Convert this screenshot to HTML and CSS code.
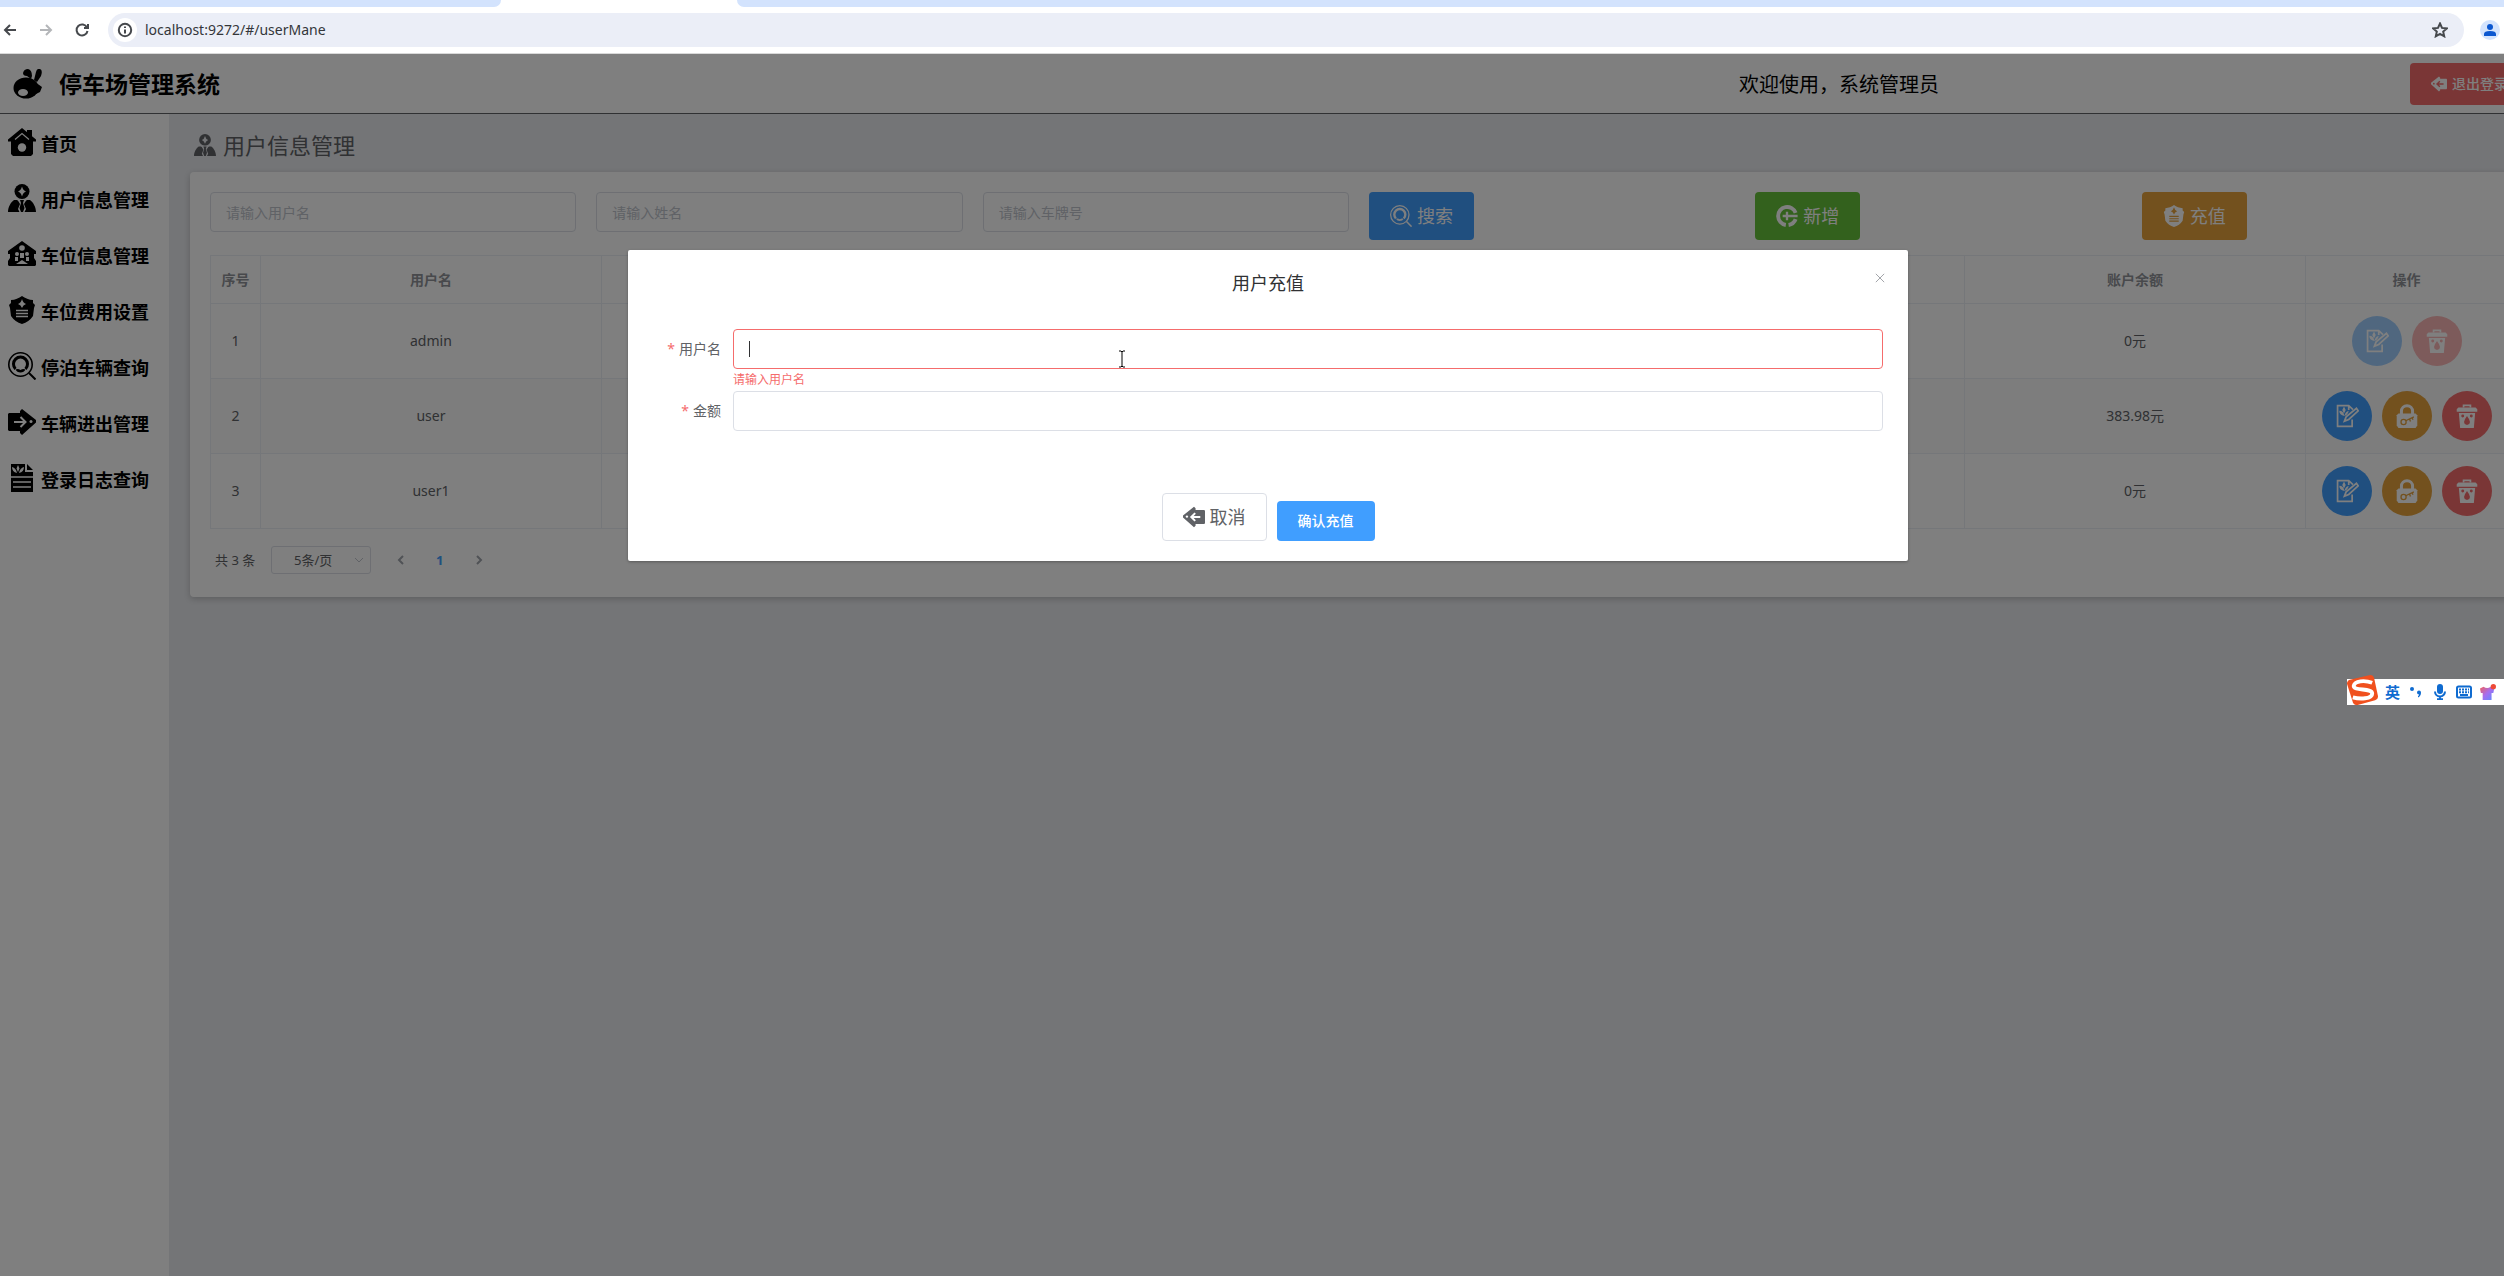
FILE: index.html
```html
<!DOCTYPE html>
<html lang="zh-CN">
  <head>
    <meta charset="UTF-8" />
    <title>停车场管理系统</title>
    <link rel="stylesheet" href="styles.css">
  </head>
  <body>
    <svg class="sprite" aria-hidden="true">
      <symbol id="i-home" viewBox="0 0 28 28">
        <path d="M19 2h5v8h-5z" />
        <path d="M14 0 0 11.500v2h3v12.500l2 2h18l2-2V13.500h3v-2z" />
        <path class="hole-line" stroke-width="1.200" d="M7 11.500 14 5.500l7 6" />
        <circle class="hole" cx="14" cy="19.500" r="4.200" />
      </symbol>
      <symbol id="i-user" viewBox="0 0 28 28">
        <circle cx="14" cy="7.500" r="7.500" />
        <path class="hole" d="M14 2.500q1 4 4 5-3 1-4 5-1-4-4-5 3-1 4-5z" />
        <path d="M0 28c0-5 3-10 6-12h3l5 3 5-3h3c3 2 6 7 6 12z" />
        <path class="hole" d="M9 15h10l-3 5 2 5-1.500 3h-5L10 25l2-5z" />
        <path d="M12 16h4l-1 3 1.500 5-1.500 4h-2l-1.500-4L13 19z" />
      </symbol>
      <symbol id="i-bank" viewBox="0 0 28 28">
        <path d="M14 1 0 11v3h2v4l-2 3v4l1 1h26l1-1v-4l-2-3v-4h2v-3z" />
        <circle class="hole" cx="14" cy="8" r="2.800" />
        <circle class="hole" cx="9" cy="14" r="2" />
        <circle class="hole" cx="19" cy="14" r="2" />
        <path class="hole" d="M12 13h4v5h-4zM7 17h3v4H7zM18 17h3v4h-3zM8 24l6-4 6 4z" />
      </symbol>
      <symbol id="i-shield" viewBox="0 0 28 28">
        <path d="M14 0c3 2 7 4 11 4v3l2 2-1 3-1 8q-4 6-11 8-7-2-11-8L2 12 1 9l2-2V4c4 0 8-2 11-4z" />
        <path class="hole" d="M14 3q1 4 4 5-3 1-4 4-1-3-4-4 3-1 4-5z" />
        <path class="hole-line" stroke-width="1.500" d="M8 14.500h12M8 17.500h12M8 20.500h12" />
      </symbol>
      <symbol id="i-find" viewBox="0 0 28 28">
        <circle class="line" cx="12.500" cy="12.500" r="11.700" stroke-width="1.600" />
        <path class="line" stroke-width="2" d="m21 21 6.500 6.500" />
        <path class="line" stroke-width="3" d="M7.500 17a7 7 0 1 1 10 0" />
        <path d="M7.500 17.500q2.500-1 5 .500 2.500-1.500 5-.500-1.500 3-5 3t-5-3z" />
      </symbol>
      <symbol id="i-out" viewBox="0 0 28 28">
        <path d="M1 5h11V3l2-2 14 11v2.500L14 27l-2-2v-2H1l-1-1V6z" />
        <path class="hole-line" stroke-width="2" d="M6 14h11M12.500 9l5 5-5 5" />
        <circle class="hole" cx="23" cy="13.500" r="1.500" />
      </symbol>
      <symbol id="i-back" viewBox="0 0 28 28">
        <path d="M27 5H16V3l-2-2L0 12v2.500L14 27l2-2v-2h11l1-1V6z" />
        <path class="hole-line" stroke-width="2.500" d="M22 14H11M15.500 9l-5 5 5 5" />
        <circle class="hole" cx="5" cy="13.500" r="1.500" />
      </symbol>
      <symbol id="i-log" viewBox="0 0 28 28">
        <path d="M3 0h14v8h8v20H3zM19 0l6 6h-6z" />
        <path class="hole" d="M10 1l1.500 3.500L10 8 8.500 4.500zM4 3q4 1 5 6-5-1-5-6zM16 3q-4 1-5 6 5-1 5-6z" />
        <path class="hole-line" stroke-width="1.500" d="M3 13h22M5 18h18M5 23h18" />
      </symbol>
      <symbol id="i-add" viewBox="0 0 28 28">
        <path class="line" stroke-width="5" d="M25 10A11.500 11.500 0 1 0 12.500 25.400M16 25.400A11.500 11.500 0 0 0 25 18" />
        <path class="line" stroke-width="3" d="M14 8.500v11M8.500 14h19" />
      </symbol>
      <symbol id="i-edit" viewBox="0 0 28 28">
        <path class="line" stroke-width="2" d="M20 18v8H3V2h13l5 4.500M16 2v5" />
        <path d="M10.500 3l2 4-2 4-2-4zM5 8q5 0 6 6-6-1-6-6zM16 8q-4 1-5 6 4-1 5-6z" />
        <path class="line" stroke-width="2" d="M11 20l2-5L25 5l2 3L16 18z" />
      </symbol>
      <symbol id="i-lock" viewBox="0 0 28 28">
        <path class="line" stroke-width="3.500" d="M7.500 13V8.500a6.500 6.500 0 0 1 13 0V13" />
        <path d="M4 11h20l2 2v12l-2 3H4l-2-3V13z" />
        <circle class="hole-line" cx="10" cy="21" r="3" stroke-width="1.500" />
        <path class="hole-line" stroke-width="1.500" d="M12.500 19.500 22 15M17 17.500l1 3M20 16l1 2.500" />
      </symbol>
      <symbol id="i-trash" viewBox="0 0 28 28">
        <path class="line" stroke-width="2" d="M10 4V1.500h8V4" />
        <path d="M4 4h20l2 2v3H2V6zM4.500 10.500h19L22 28H6z" />
        <path class="hole" d="M14 14q7 9 0 10.500-7-1.500 0-10.500z" />
        <circle class="hole" cx="9" cy="14" r="1.700" />
        <circle class="hole" cx="19" cy="14" r="1.700" />
      </symbol>
    </svg>

    <div class="browser">
      <div class="tabs">
        <span class="tab tab-left"></span>
        <span class="tab tab-right"></span>
      </div>
      <div class="toolbar">
        <button class="nav-btn" aria-label="后退"><svg viewBox="0 0 16 16"><path d="M14 8H3M8 3 3 8l5 5" /></svg></button>
        <button class="nav-btn dim" aria-label="前进"><svg viewBox="0 0 16 16"><path d="M2 8h11M8 3l5 5-5 5" /></svg></button>
        <button class="nav-btn" aria-label="刷新"><svg viewBox="0 0 16 16"><path d="M13 5.500A5.500 5.500 0 1 0 13.500 9M14 2v4h-4" /></svg></button>
        <div class="address">
          <span class="site-info"><svg viewBox="0 0 16 16"><circle cx="8" cy="8" r="6.200" /><path d="M8 7.500v4M8 4.500v1.500" /></svg></span>
          <input class="url" aria-label="地址" value="localhost:9272/#/userMane" />
          <svg class="star" viewBox="0 0 16 16"><path d="m8 1.500 2 4.400 4.800.500-3.600 3.200 1 4.700L8 11.900l-4.200 2.400 1-4.700L1.200 6.400 6 5.900z" /></svg>
        </div>
        <span class="profile"><svg viewBox="0 0 20 20"><circle cx="10" cy="7" r="3" /><path d="M4 16v-2q0-3 6-3t6 3v2z" /></svg></span>
      </div>
    </div>

    <div class="page">
      <div class="app">
        <header class="header">
          <div class="brand">
            <svg class="logo" viewBox="0 0 30 30">
              <ellipse cx="13" cy="19" rx="12.500" ry="10.500" />
              <path d="M10 4q1-4 5-4 4 1 4 7l-1 3-4-3q-4 0-4-3zM23 3q1-4 4-3 3 1 1 7l-4 6-3-2zM22 13l7 5-2 5-4 2z" />
              <ellipse class="hole" cx="10" cy="23.500" rx="5" ry="3.500" />
            </svg>
            <h1>停车场管理系统</h1>
          </div>
          <span class="welcome">欢迎使用，系统管理员</span>
          <button class="btn danger logout"><svg class="icon"><use href="#i-back" /></svg>退出登录</button>
        </header>

        <div class="layout">
          <nav class="sidebar">
            <a href="#/home"><svg class="icon"><use href="#i-home" /></svg><span>首页</span></a>
            <a href="#/userMane"><svg class="icon"><use href="#i-user" /></svg><span>用户信息管理</span></a>
            <a href="#/space"><svg class="icon"><use href="#i-bank" /></svg><span>车位信息管理</span></a>
            <a href="#/price"><svg class="icon"><use href="#i-shield" /></svg><span>车位费用设置</span></a>
            <a href="#/parking"><svg class="icon"><use href="#i-find" /></svg><span>停泊车辆查询</span></a>
            <a href="#/record"><svg class="icon"><use href="#i-out" /></svg><span>车辆进出管理</span></a>
            <a href="#/log"><svg class="icon"><use href="#i-log" /></svg><span>登录日志查询</span></a>
          </nav>

          <main class="main">
            <h2><svg class="icon"><use href="#i-user" /></svg>用户信息管理</h2>
            <section class="card">
              <form class="filters">
                <input class="field" placeholder="请输入用户名" aria-label="用户名" />
                <input class="field" placeholder="请输入姓名" aria-label="姓名" />
                <input class="field" placeholder="请输入车牌号" aria-label="车牌号" />
                <button type="button" class="btn big primary"><svg class="icon"><use href="#i-find" /></svg>搜索</button>
                <button type="button" class="btn big success"><svg class="icon"><use href="#i-add" /></svg>新增</button>
                <button type="button" class="btn big warning"><svg class="icon"><use href="#i-shield" /></svg>充值</button>
              </form>

              <table class="table">
                <colgroup>
                  <col class="col-index" />
                  <col span="6" />
                  <col class="col-action" />
                </colgroup>
                <thead>
                  <tr><th>序号</th><th>用户名</th><th></th><th></th><th></th><th></th><th>账户余额</th><th>操作</th></tr>
                </thead>
                <tbody>
                  <tr>
                    <td>1</td><td>admin</td><td></td><td></td><td></td><td></td><td>0元</td>
                    <td>
                      <div class="actions">
                        <button class="circle primary" aria-label="编辑" disabled><svg class="icon"><use href="#i-edit" /></svg></button>
                        <button class="circle danger" aria-label="删除" disabled><svg class="icon"><use href="#i-trash" /></svg></button>
                      </div>
                    </td>
                  </tr>
                  <tr class="hover">
                    <td>2</td><td>user</td><td></td><td></td><td></td><td></td><td>383.98元</td>
                    <td>
                      <div class="actions">
                        <button class="circle primary" aria-label="编辑"><svg class="icon"><use href="#i-edit" /></svg></button>
                        <button class="circle warning" aria-label="重置密码"><svg class="icon"><use href="#i-lock" /></svg></button>
                        <button class="circle danger" aria-label="删除"><svg class="icon"><use href="#i-trash" /></svg></button>
                      </div>
                    </td>
                  </tr>
                  <tr>
                    <td>3</td><td>user1</td><td></td><td></td><td></td><td></td><td>0元</td>
                    <td>
                      <div class="actions">
                        <button class="circle primary" aria-label="编辑"><svg class="icon"><use href="#i-edit" /></svg></button>
                        <button class="circle warning" aria-label="重置密码"><svg class="icon"><use href="#i-lock" /></svg></button>
                        <button class="circle danger" aria-label="删除"><svg class="icon"><use href="#i-trash" /></svg></button>
                      </div>
                    </td>
                  </tr>
                </tbody>
              </table>

              <div class="pagination">
                <span>共 3 条</span>
                <span class="size">
                  <select aria-label="每页条数"><option>5条/页</option></select>
                  <svg viewBox="0 0 12 12"><path d="m2 4 4 4 4-4" /></svg>
                </span>
                <button aria-label="上一页"><svg viewBox="0 0 12 12"><path d="M8 2 4 6l4 4" /></svg></button>
                <button class="current">1</button>
                <button aria-label="下一页"><svg viewBox="0 0 12 12"><path d="m4 2 4 4-4 4" /></svg></button>
              </div>
            </section>
          </main>
        </div>
      </div>

      <div class="mask">
        <div class="dialog" role="dialog" aria-labelledby="dialog-title">
          <h3 id="dialog-title">用户充值</h3>
          <button class="close" aria-label="关闭"><svg viewBox="0 0 12 12"><path d="m1 1 10 10M11 1 1 11" /></svg></button>
          <form>
            <div class="form-item">
              <label for="username">用户名</label>
              <div class="control">
                <input id="username" class="field error" />
                <span class="caret"></span>
                <span class="message">请输入用户名</span>
              </div>
            </div>
            <div class="form-item">
              <label for="amount">金额</label>
              <div class="control">
                <input id="amount" class="field" />
              </div>
            </div>
            <div class="footer">
              <button type="button" class="btn big plain"><svg class="icon"><use href="#i-back" /></svg>取消</button>
              <button type="button" class="btn primary">确认充值</button>
            </div>
          </form>
        </div>
      </div>
    </div>

    <svg class="pointer" viewBox="0 0 8 18"><path d="M1 1h2l1 1 1-1h2M4 2v14M1 17h2l1-1 1 1h2" /></svg>

    <div class="ime">
      <svg class="ime-logo" viewBox="0 0 32 32">
        <path fill="#f0501e" d="M3 5 24 0q3 0 4 3l4 19q0 3-3 4L11 31q-4 0-5-3L0 9q0-3 3-4z" />
        <path fill="none" stroke="#fff" stroke-width="4" d="M26 8C18 5 8 6 7 11c-1 6 19 2 19 8 0 6-13 6-20 4" />
      </svg>
      <span class="ime-lang">英</span>
      <svg viewBox="0 0 16 16"><circle cx="4" cy="5" r="2" /><path d="M9 8.500a2 2 0 1 1 4 0q0 3.500-3 5v-1.500q1-.500 1-1.500-2 0-2-2z" /></svg>
      <svg viewBox="0 0 16 16"><rect x="5" y="0" width="6" height="10" rx="3" /><path class="ime-line" d="M3 7.500a5 5 0 0 0 10 0M8 12.500V16M5 15.200h6" /></svg>
      <svg viewBox="0 0 16 16"><rect class="ime-line" x="1" y="2.500" width="14" height="11" rx="1.500" /><path class="ime-line" stroke-dasharray="2 1" d="M3 5.500h10M3 8.200h10" /><path class="ime-line" d="M4 11h8" /></svg>
      <svg viewBox="0 0 18 18">
        <linearGradient id="shirt" x1="0" y1="0" x2="1" y2="1"><stop offset="0" stop-color="#f0605a" /><stop offset=".500" stop-color="#a66df0" /><stop offset="1" stop-color="#5a8cff" /></linearGradient>
        <path fill="url(#shirt)" d="M0 5l4-2q4 3 8 0l4 2-1 5h-2v8H3v-8H1z" />
        <circle fill="#ee4a37" cx="15" cy="3" r="3" />
      </svg>
    </div>
  </body>
</html>
```
FILE: styles.css
```css
* {
  margin: 0;
  padding: 0;
  box-sizing: border-box;
}
body {
  height: 100vh;
  overflow: hidden;
  display: flex;
  flex-direction: column;
  font-family: "Noto Sans", "Noto Sans CJK SC", sans-serif;
  font-size: 14px;
  line-height: 20px;
  color: #606266;
}
button,
input,
select {
  font: inherit;
  border: none;
  background: none;
  outline: none;
}
button {
  cursor: pointer;
}
svg {
  display: block;
  flex: none;
}
.sprite {
  position: absolute;
  width: 0;
  height: 0;
}
.icon {
  width: 24px;
  height: 24px;
  fill: currentColor;
}
.line {
  fill: none;
  stroke: currentColor;
}
.hole {
  fill: var(--bg, #fff);
}
.hole-line {
  fill: none;
  stroke: var(--bg, #fff);
}

/* browser bar */
.browser {
  background: #fff;
  border-bottom: 1px solid #d9d9d9;
}
.tabs {
  display: flex;
  gap: 236px;
  height: 7px;
}
.tab {
  background: #d3e3fd;
}
.tab-left {
  width: 20%;
  border-bottom-right-radius: 7px;
}
.tab-right {
  flex: 1;
  border-bottom-left-radius: 7px;
}
.toolbar {
  display: flex;
  align-items: center;
  height: 46px;
  padding-right: 4px;
}
.nav-btn {
  width: 36px;
  padding-left: 2px;
}
.nav-btn svg,
.site-info svg,
.star {
  width: 16px;
  height: 16px;
  fill: none;
  stroke: #46494d;
  stroke-width: 2;
}
.dim svg {
  stroke: #b4b6b9;
}
.address {
  flex: 1;
  display: flex;
  align-items: center;
  gap: 8px;
  height: 34px;
  padding: 0 16px 0 5px;
  border-radius: 17px;
  background: #ebeef7;
}
.site-info {
  padding: 4px;
  border-radius: 50%;
  background: #fff;
}
.url {
  flex: 1;
  color: #34363a;
  font-size: 14px;
}
.profile {
  margin-left: 16px;
  border-radius: 50%;
  background: #d3e3fd;
}
.profile svg {
  width: 20px;
  height: 20px;
  fill: #0b57d0;
}

/* application */
.page {
  flex: 1;
  position: relative;
  overflow: hidden;
}
.app {
  display: flex;
  flex-direction: column;
  width: calc(100% + 44px);
  height: 100%;
}
.header {
  display: grid;
  grid-template-columns: 1739fr 671fr 138fr;
  align-items: center;
  height: 60px;
  border-bottom: 1px solid #606266;
  color: #000;
}
.brand {
  display: flex;
  align-items: center;
  gap: 16px;
  padding-left: 13px;
}
.logo {
  width: 30px;
  height: 30px;
}
h1 {
  font-size: 23px;
  line-height: 32px;
}
.welcome {
  padding-top: 2px;
  font-size: 20px;
  line-height: 28px;
}
.layout {
  flex: 1;
  display: flex;
}
.sidebar {
  width: 169px;
}
.sidebar a {
  display: flex;
  align-items: center;
  gap: 5px;
  height: 56px;
  padding-left: 8px;
  color: #000;
  font-size: 18px;
  font-weight: bold;
  text-decoration: none;
}
.sidebar .icon {
  width: 28px;
  height: 28px;
}
.sidebar span {
  padding-top: 4px;
}
.main {
  flex: 1;
  padding: 16px 20px 20px 21px;
  background: #e8eaee;
  --bg: #e8eaee;
}
h2 {
  display: flex;
  align-items: center;
  gap: 7px;
  height: 30px;
  margin-bottom: 12px;
  padding-left: 4px;
  font-size: 22px;
  font-weight: normal;
}
h2 .icon {
  width: 22px;
  height: 22px;
}
.card {
  padding: 20px;
  border-radius: 4px;
  background: #fff;
  box-shadow: 0 2px 6px rgba(0, 0, 0, 0.2);
}
.filters {
  display: grid;
  grid-template-columns: repeat(6, 1fr);
  gap: 20px;
  align-items: start;
  justify-items: start;
  margin-bottom: 15px;
}
.field {
  display: block;
  width: 100%;
  height: 40px;
  padding: 0 15px;
  border: 1px solid #dcdfe6;
  border-radius: 4px;
}
.field::placeholder {
  color: #c0c4cc;
}
.btn {
  display: inline-flex;
  align-items: center;
  gap: 5px;
  height: 40px;
  padding: 0 20px;
  border: 1px solid transparent;
  border-radius: 4px;
  color: #fff;
  font-weight: 500;
  white-space: nowrap;
}
.btn.big {
  height: 48px;
  font-size: 18px;
  font-weight: normal;
}
.btn.big .icon {
  width: 22px;
  height: 22px;
}
.btn.logout {
  justify-self: start;
  height: 42px;
}
.logout .icon {
  width: 16px;
  height: 16px;
}
.primary {
  --bg: #409eff;
  background: #409eff;
}
.success {
  --bg: #67c23a;
  background: #67c23a;
}
.warning {
  --bg: #e6a23c;
  background: #e6a23c;
}
.danger {
  --bg: #f56c6c;
  background: #f56c6c;
}
.plain {
  --bg: #fff;
  border-color: #dcdfe6;
  background: #fff;
  color: #606266;
}
.table {
  width: 100%;
  table-layout: fixed;
  border-collapse: collapse;
  text-align: center;
}
.col-index {
  width: 50px;
}
.col-action {
  width: 202px;
}
.table th,
.table td {
  border: 1px solid #ebeef5;
}
.table th {
  height: 48px;
  color: #909399;
}
.table td {
  height: 75px;
}
.hover {
  background: #fafafa;
}
.actions {
  display: flex;
  justify-content: center;
  gap: 10px;
}
.circle {
  display: flex;
  align-items: center;
  justify-content: center;
  width: 50px;
  height: 50px;
  border-radius: 50%;
  color: #fff;
}
.circle.primary:disabled {
  --bg: #a0cfff;
  background: #a0cfff;
}
.circle.danger:disabled {
  --bg: #fab6b6;
  background: #fab6b6;
}
.pagination {
  display: flex;
  align-items: center;
  padding: 17px 5px 3px;
  font-size: 13px;
}
.pagination svg {
  width: 12px;
  height: 12px;
  margin: 0 auto;
  fill: none;
  stroke: #a0a4ac;
  stroke-width: 2;
}
.size {
  position: relative;
  margin: 0 10px 0 16px;
}
.size select {
  width: 100px;
  height: 28px;
  padding-right: 16px;
  border: 1px solid #dcdfe6;
  border-radius: 3px;
  appearance: none;
  color: #606266;
  text-align: center;
  text-align-last: center;
}
.size svg {
  position: absolute;
  right: 6px;
  top: 8px;
  stroke: #c0c4cc;
  stroke-width: 1;
}
.pagination button {
  width: 39px;
  height: 28px;
}
.pagination .current {
  color: #409eff;
  font-weight: bold;
}

/* recharge dialog */
.mask {
  position: absolute;
  inset: 0 -32px 0 0;
  padding-top: 196px;
  background: rgba(0, 0, 0, 0.5);
}
.dialog {
  position: relative;
  width: 90%;
  max-width: 1280px;
  margin: 0 auto;
  padding: 20px 25px;
  border-radius: 2px;
  background: #fff;
  box-shadow: 0 1px 3px rgba(0, 0, 0, 0.3);
}
h3 {
  margin-bottom: 33px;
  color: #303133;
  font-size: 18px;
  font-weight: normal;
  line-height: 26px;
  text-align: center;
}
.close {
  position: absolute;
  top: 23px;
  right: 23px;
}
.close svg {
  width: 10px;
  height: 10px;
  fill: none;
  stroke: #909399;
}
.form-item {
  display: flex;
  margin-bottom: 22px;
}
.form-item label {
  width: 80px;
  padding-right: 12px;
  line-height: 40px;
  text-align: right;
}
.form-item label::before {
  content: "*";
  margin-right: 4px;
  color: #f56c6c;
}
.control {
  flex: 1;
  position: relative;
}
.error {
  border-color: #f56c6c;
}
.caret {
  position: absolute;
  left: 16px;
  top: 12px;
  width: 1px;
  height: 16px;
  background: #303133;
}
.message {
  position: absolute;
  left: 0;
  top: 42px;
  color: #f56c6c;
  font-size: 12px;
  line-height: 18px;
}
.footer {
  display: flex;
  align-items: flex-end;
  justify-content: center;
  gap: 10px;
  margin-top: 62px;
}

.pointer {
  position: absolute;
  left: 1118px;
  top: 350px;
  width: 8px;
  height: 18px;
  fill: none;
  stroke: #000;
}
.ime {
  position: absolute;
  right: 0;
  top: 679px;
  display: flex;
  align-items: center;
  gap: 8px;
  height: 26px;
  padding: 0 8px 0 38px;
  background: #fff;
}
.ime svg {
  width: 16px;
  height: 16px;
  fill: #0f6bd0;
}
.ime .ime-line {
  fill: none;
  stroke: #0f6bd0;
  stroke-width: 2;
}
.ime .ime-logo {
  position: absolute;
  left: 0;
  top: -4px;
  width: 31px;
  height: 31px;
}
.ime-lang {
  color: #0f6bd0;
  font-size: 15px;
  font-weight: bold;
}
```
